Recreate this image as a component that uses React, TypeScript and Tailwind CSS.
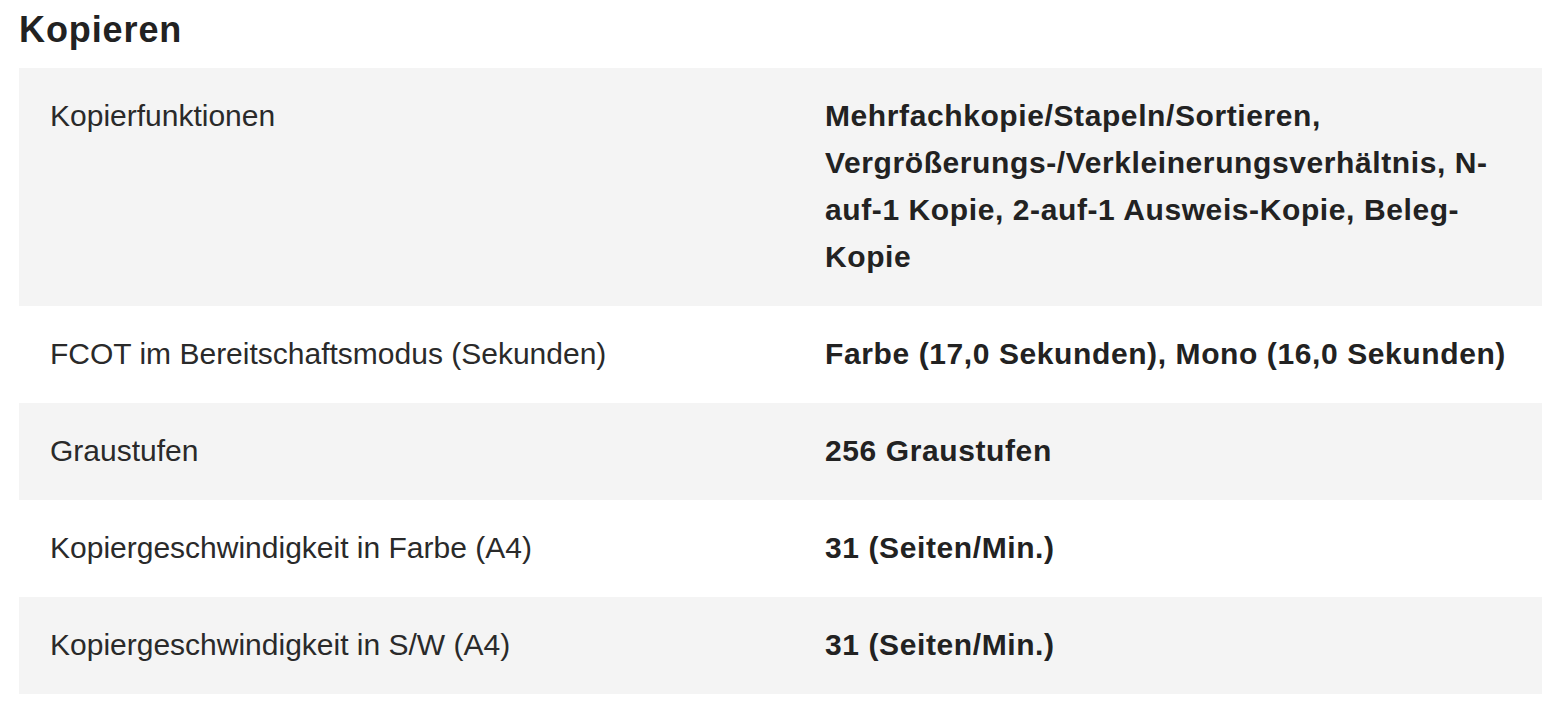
import React from 'react';

const rows: { label: string; value: string }[] = [
  {
    label: 'Kopierfunktionen',
    value:
      'Mehrfachkopie/Stapeln/Sortieren, Vergrößerungs-/Verkleinerungsverhältnis, N-auf-1 Kopie, 2-auf-1 Ausweis-Kopie, Beleg-Kopie',
  },
  { label: 'FCOT im Bereitschaftsmodus (Sekunden)', value: 'Farbe (17,0 Sekunden), Mono (16,0 Sekunden)' },
  { label: 'Graustufen', value: '256 Graustufen' },
  { label: 'Kopiergeschwindigkeit in Farbe (A4)', value: '31 (Seiten/Min.)' },
  { label: 'Kopiergeschwindigkeit in S/W (A4)', value: '31 (Seiten/Min.)' },
];

export default function App() {
  return (
    <div className="min-h-screen bg-white pl-[19px] text-[#222] font-['Liberation_Sans',Arial,sans-serif]">
      {/* Section title */}
      <h2 className="pt-[8px] pb-[16px] text-[36px] leading-[44px] font-bold tracking-[0.025em]">Kopieren</h2>

      {/* Spec table */}
      <div className="flex flex-col">
        {rows.map((row, i) => (
          <div
            key={row.label}
            className={`grid grid-cols-[775px_1fr] pt-[24px] pb-[26px] text-[30px] leading-[47px] ${
              i % 2 === 0 ? 'bg-[#f4f4f4]' : 'bg-white'
            }`}
          >
            <div className="pl-[31px] pr-6 font-normal text-[#2a2a2a]">{row.label}</div>
            <div className="pl-[31px] pr-[31px] font-bold tracking-[0.02em]">{row.value}</div>
          </div>
        ))}
      </div>
    </div>
  );
}
